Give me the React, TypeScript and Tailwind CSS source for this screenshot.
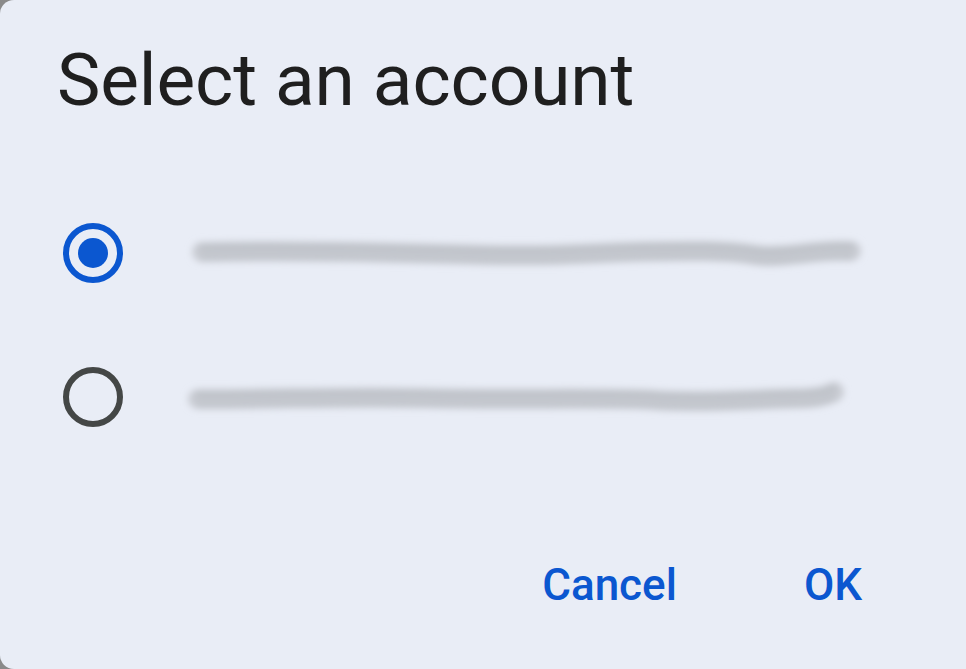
import React from "react";

const Radio = ({ checked }: { checked: boolean }) => (
  <svg width="62" height="62" viewBox="0 0 62 62" className="shrink-0">
    <circle
      cx="31"
      cy="31"
      r="27"
      fill="none"
      stroke={checked ? "#0b57d0" : "#444746"}
      strokeWidth="6"
    />
    {checked ? <circle cx="31" cy="31" r="15" fill="#0b57d0" /> : null}
  </svg>
);

// redacted account name: smeared grey scribble
const Smudge = ({ id, width, wave }: { id: string; width: number; wave: string }) => (
  <svg width={width} height="62" viewBox={`0 0 ${width} 62`} className="shrink-0 overflow-visible">
    <defs>
      <filter id={id} x="-5%" y="-100%" width="110%" height="300%">
        <feGaussianBlur stdDeviation="3.5" />
      </filter>
    </defs>
    <g filter={`url(#${id})`}>
      <path d={wave} fill="none" stroke="#c9ccd3" strokeWidth="20" strokeLinecap="round" />
      <path d={wave} fill="none" stroke="#b4b7be" strokeWidth="6" strokeLinecap="round" opacity="0.6" transform="translate(0 -4)" />
      <path d={wave} fill="none" stroke="#b0b3ba" strokeWidth="4" strokeLinecap="round" opacity="0.5" transform="translate(0 6)" />
    </g>
  </svg>
);

const App = () => {
  return (
    <div className="w-[966px] h-[669px] bg-[#8a8a8a] font-['Roboto',sans-serif]">
      <div className="w-full h-full bg-[#e9edf6] rounded-l-[14px] flex flex-col">
        <h1 className="pl-[57px] pt-[36px] text-[73px] leading-[88px] text-[#1f1f1f] tracking-[-0.1px]">
          Select an account
        </h1>
        <div className="mt-[98px] flex flex-col gap-[82px] pl-[62px]">
          <div className="flex items-center gap-[62px] h-[62px]">
            <Radio checked />
            <Smudge
              id="s1"
              width={680}
              wave="M16 30 C 120 27, 240 32, 320 33 C 400 34, 420 28, 520 29 C 580 30, 560 36, 600 33 C 640 29, 650 28, 665 29"
            />
          </div>
          <div className="flex items-center gap-[62px] h-[62px]">
            <Radio checked={false} />
            <Smudge
              id="s2"
              width={660}
              wave="M12 33 C 100 33, 160 30, 240 32 C 330 34, 420 31, 470 34 C 520 37, 560 33, 620 32 C 640 31, 645 27, 648 26"
            />
          </div>
        </div>
        <div className="mt-auto mb-[62px] flex justify-end gap-[127px] pr-[104px]">
          <button className="text-[44px] leading-none font-medium text-[#0b57d0]">Cancel</button>
          <button className="text-[44px] leading-none font-medium text-[#0b57d0]">OK</button>
        </div>
      </div>
    </div>
  );
};

export default App;
